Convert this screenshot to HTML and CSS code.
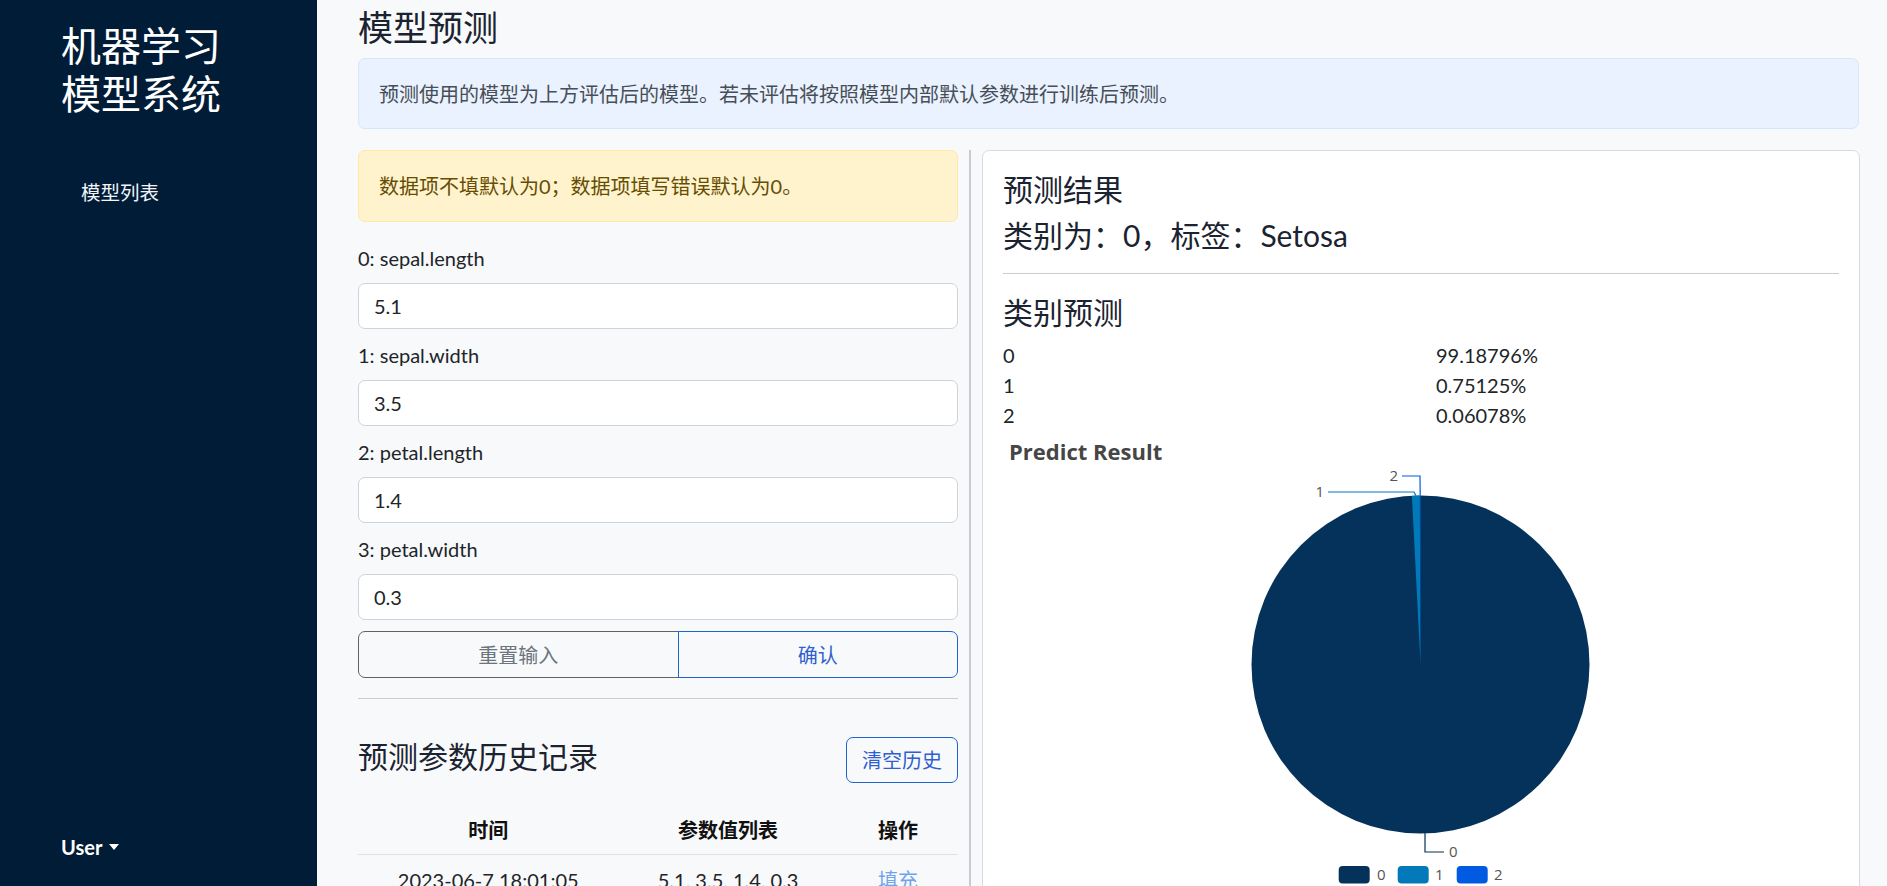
FILE: index.html
```html
<!DOCTYPE html>
<html lang="zh-CN">
<head>
<meta charset="utf-8">
<title>模型预测</title>
<link rel="stylesheet" href="styles.css">
</head>
<body>
<div class="app">
  <aside class="sidebar">
    <div class="brand">机器学习<br>模型系统</div>
    <nav class="nav">
      <a class="nav-link">模型列表</a>
    </nav>
    <div class="user">User <span class="caret"></span></div>
  </aside>
  <main class="main">
    <h2 class="page-title">模型预测</h2>
    <div class="alert alert-info">预测使用的模型为上方评估后的模型。若未评估将按照模型内部默认参数进行训练后预测。</div>
    <div class="cols">
      <section class="left-col">
        <div class="alert alert-warn">数据项不填默认为0；数据项填写错误默认为0。</div>
        <div class="field">
          <label class="field-label">0: sepal.length</label>
          <div class="input">5.1</div>
        </div>
        <div class="field">
          <label class="field-label">1: sepal.width</label>
          <div class="input">3.5</div>
        </div>
        <div class="field">
          <label class="field-label">2: petal.length</label>
          <div class="input">1.4</div>
        </div>
        <div class="field">
          <label class="field-label">3: petal.width</label>
          <div class="input">0.3</div>
        </div>
        <div class="btn-group">
          <button class="btn btn-gray">重置输入</button>
          <button class="btn btn-blue">确认</button>
        </div>
        <hr class="sep">
        <div class="history-head">
          <h3 class="history-title">预测参数历史记录</h3>
          <button class="btn btn-blue btn-clear">清空历史</button>
        </div>
        <table class="history">
          <thead>
            <tr><th class="c-time">时间</th><th class="c-vals">参数值列表</th><th class="c-op">操作</th></tr>
          </thead>
          <tbody>
            <tr><td>2023-06-7 18:01:05</td><td>5.1, 3.5, 1.4, 0.3</td><td><a class="fill-link">填充</a></td></tr>
          </tbody>
        </table>
      </section>
      <section class="card">
        <h4 class="result-title">预测结果</h4>
        <h4 class="result-label">类别为：0，标签：Setosa</h4>
        <hr class="card-sep">
        <h4 class="cls-title">类别预测</h4>
        <div class="prob-row"><span>0</span><span>99.18796%</span></div>
        <div class="prob-row"><span>1</span><span>0.75125%</span></div>
        <div class="prob-row"><span>2</span><span>0.06078%</span></div>
        <svg class="chart" width="836" height="460" viewBox="0 0 836 460">
          <text class="chart-title" x="6" y="25">Predict Result</text>
          <circle cx="417.5" cy="229.5" r="169" fill="#04325a"/>
          <path d="M417.5,229.5 L408.89,60.72 A169,169 0 0,1 416.85,60.5 Z" fill="#0279b9"/>
          <path d="M417.5,229.5 L416.85,60.5 A169,169 0 0,1 417.5,60.5 Z" fill="#005ae2"/>
          <polyline points="412.9,60.6 411,57 325,57" fill="none" stroke="#0279b9" stroke-width="1.2"/>
          <polyline points="417.2,60.5 417,41 399,41" fill="none" stroke="#005ae2" stroke-width="1.2"/>
          <polyline points="422,398 422,417 441,417" fill="none" stroke="#04325a" stroke-width="1.2"/>
          <text class="pie-label" x="321" y="62" text-anchor="end">1</text>
          <text class="pie-label" x="395" y="46" text-anchor="end">2</text>
          <text class="pie-label" x="446" y="422">0</text>
          <rect x="335.7" y="431" width="31" height="17.5" rx="4" fill="#04325a"/>
          <text class="pie-label" x="374" y="445">0</text>
          <rect x="394.7" y="431" width="31" height="17.5" rx="4" fill="#0279b9"/>
          <text class="pie-label" x="432" y="445">1</text>
          <rect x="453.7" y="431" width="31" height="17.5" rx="4" fill="#005ae2"/>
          <text class="pie-label" x="491" y="445">2</text>
        </svg>
      </section>
    </div>
  </main>
</div>
</body>
</html>
```
FILE: styles.css
```css
* { box-sizing: border-box; }
html, body { margin: 0; padding: 0; }
body {
  font-family: Lato, "Noto Sans CJK SC", sans-serif;
  font-size: 20px;
  line-height: 30px;
  color: #212529;
  background: #f8f9fa;
}
.app {
  display: flex;
  height: 100vh;
  overflow: hidden;
}
.sidebar {
  width: 317px;
  flex: 0 0 317px;
  background: #011c37;
  color: #fff;
  display: flex;
  flex-direction: column;
  padding: 22px 0 0 61px;
}
.brand {
  font-size: 40px;
  line-height: 48px;
  color: #fff;
  margin-bottom: 60px;
}
.nav { display: flex; flex-direction: column; }
.nav-link {
  padding-left: 20px;
  font-size: 19.5px;
  line-height: 29px;
  color: #f2f4f7;
}
.user {
  margin-top: auto;
  margin-bottom: 24px;
  font-weight: 700;
  font-size: 20px;
  line-height: 30px;
  display: flex;
  align-items: center;
  gap: 7px;
}
.caret {
  width: 0; height: 0;
  border-left: 5px solid transparent;
  border-right: 5px solid transparent;
  border-top: 6px solid #fff;
}
.main {
  flex: 1;
  min-width: 0;
  padding: 0 28px 0 41px;
  overflow: hidden;
}
.page-title {
  font-size: 35px;
  line-height: 42px;
  font-weight: 400;
  margin: 6px 0 10px;
  color: #1b2330;
}
.alert {
  border: 1px solid;
  border-radius: 7px;
  padding: 19.5px 20px;
  line-height: 30px;
}
.alert-info {
  background: #e9f2fe;
  border-color: #d7e6fb;
  color: #474e57;
  margin-bottom: 21px;
}
.alert-warn {
  background: #fff3cd;
  border-color: #fde8a8;
  color: #664d03;
  margin-bottom: 21px;
  padding: 20px;
}
.cols {
  display: flex;
  align-items: stretch;
}
.left-col {
  width: 613px;
  flex: 0 0 613px;
  padding-right: 11px;
  border-right: 2px solid #c6cbd1;
}
.field { margin-bottom: 11px; }
.field-label {
  display: block;
  margin-bottom: 10px;
  line-height: 30px;
}
.input {
  height: 46px;
  border: 1px solid #ced4da;
  border-radius: 7px;
  background: #fff;
  padding: 0 15px;
  display: flex;
  align-items: center;
}
.btn {
  font-family: inherit;
  font-size: 20px;
  line-height: 30px;
  background: transparent;
  border: 1px solid;
  border-radius: 7px;
  cursor: pointer;
}
.btn-gray { color: #6c757d; border-color: #5c636a; }
.btn-blue { color: #2f5fd0; border-color: #1f63d3; }
.btn-group {
  display: flex;
  height: 47px;
}
.btn-group .btn {
  flex: 1 1 auto;
  padding: 0 15px;
}
.btn-group .btn-gray { border-radius: 7px 0 0 7px; }
.btn-group .btn-blue { border-radius: 0 7px 7px 0; margin-left: -1px; position: relative; }
.sep {
  border: 0;
  border-top: 1px solid #c9cdd2;
  margin: 20px 0 0;
}
.history-head {
  display: flex;
  justify-content: space-between;
  align-items: center;
  margin-top: 38px;
}
.history-title {
  font-size: 30px;
  line-height: 36px;
  font-weight: 400;
  margin: 0 0 9px;
  color: #1b2330;
}
.btn-clear {
  height: 46px;
  padding: 0 15px;
}
.history {
  width: 100%;
  border-collapse: collapse;
  margin-top: 22px;
  table-layout: fixed;
}
.history th, .history td {
  text-align: center;
  padding: 9.5px 8px;
  line-height: 30px;
}
.history th {
  font-weight: 700;
  color: #111;
  border-bottom: 1px solid #dee2e6;
}
.c-time { width: 260px; }
.c-vals { width: 219px; }
.c-op { width: 120px; }
.fill-link { color: #6ea4ef; }
.card {
  flex: 1;
  margin-left: 11px;
  background: #fff;
  border: 1px solid #d8dce1;
  border-radius: 7px;
  padding: 20px 20px 0;
  margin-bottom: -200px;
}
.result-title, .result-label, .cls-title {
  font-size: 30px;
  line-height: 36px;
  font-weight: 400;
  color: #1b2330;
  margin: 0;
}
.result-title { margin-bottom: 10px; }
.card-sep {
  border: 0;
  border-top: 1px solid #c9ccd1;
  margin: 20px 0 20px;
}
.cls-title { margin-bottom: 10px; }
.prob-row {
  display: grid;
  grid-template-columns: 433px 1fr;
  line-height: 30px;
}
.chart {
  display: block;
  margin-top: 5px;
}
.chart-title {
  font-family: "Open Sans", "Noto Sans", sans-serif;
  font-weight: 700;
  font-size: 22px;
  fill: #464646;
}
.pie-label {
  font-family: "Open Sans", "Noto Sans", sans-serif;
  font-size: 15px;
  fill: #555;
}
```
